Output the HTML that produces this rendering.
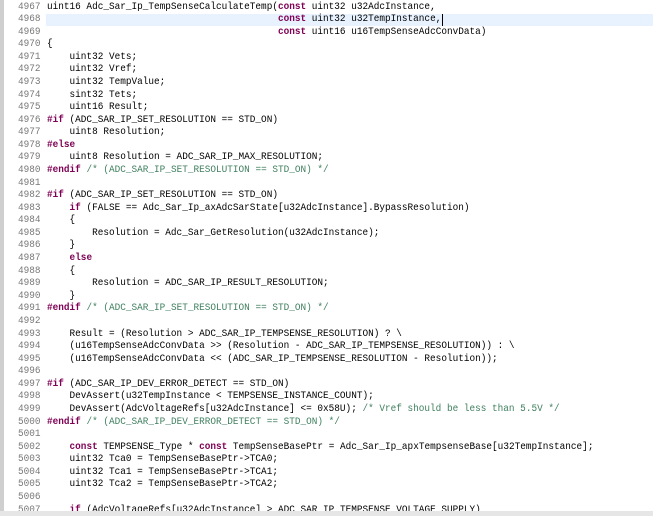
<html><head><style>
body{margin:0;width:653px;height:516px;background:#fff;overflow:hidden;position:relative;font-family:"Liberation Mono",monospace;}
#strip{position:absolute;left:0;top:0;width:4px;height:516px;background:#cfcfcf}
#hl{position:absolute;left:46px;top:13.6px;width:607px;height:12.6px;background:#e8f2fe}
#cur{position:absolute;left:442px;top:14px;width:1px;height:12px;background:#000}
pre{position:absolute;margin:0;top:0.5px;font-family:"Liberation Mono",monospace;font-size:10.5px;line-height:12.58px;letter-spacing:0;transform-origin:0 0;transform:scaleX(0.894)}
#ln{left:18px;color:#787878}
#code{left:47px;color:#000}
b{color:#7f0055}
i{font-style:normal;color:#3f7f5f}
#bot{position:absolute;left:0;top:511px;width:653px;height:5px;background:#e6e6e6}
</style></head><body>
<div id="strip"></div><div id="hl"></div><div id="cur"></div>
<pre id="ln">4967
4968
4969
4970
4971
4972
4973
4974
4975
4976
4977
4978
4979
4980
4981
4982
4983
4984
4985
4986
4987
4988
4989
4990
4991
4992
4993
4994
4995
4996
4997
4998
4999
5000
5001
5002
5003
5004
5005
5006
5007</pre>
<pre id="code">uint16 Adc_Sar_Ip_TempSenseCalculateTemp(<b>const</b> uint32 u32AdcInstance,
                                         <b>const</b> uint32 u32TempInstance,
                                         <b>const</b> uint16 u16TempSenseAdcConvData)
{
    uint32 Vets;
    uint32 Vref;
    uint32 TempValue;
    sint32 Tets;
    uint16 Result;
<b>#if</b> (ADC_SAR_IP_SET_RESOLUTION == STD_ON)
    uint8 Resolution;
<b>#else</b>
    uint8 Resolution = ADC_SAR_IP_MAX_RESOLUTION;
<b>#endif</b> <i>/* (ADC_SAR_IP_SET_RESOLUTION == STD_ON) */</i>

<b>#if</b> (ADC_SAR_IP_SET_RESOLUTION == STD_ON)
    <b>if</b> (FALSE == Adc_Sar_Ip_axAdcSarState[u32AdcInstance].BypassResolution)
    {
        Resolution = Adc_Sar_GetResolution(u32AdcInstance);
    }
    <b>else</b>
    {
        Resolution = ADC_SAR_IP_RESULT_RESOLUTION;
    }
<b>#endif</b> <i>/* (ADC_SAR_IP_SET_RESOLUTION == STD_ON) */</i>

    Result = (Resolution &gt; ADC_SAR_IP_TEMPSENSE_RESOLUTION) ? \
    (u16TempSenseAdcConvData &gt;&gt; (Resolution - ADC_SAR_IP_TEMPSENSE_RESOLUTION)) : \
    (u16TempSenseAdcConvData &lt;&lt; (ADC_SAR_IP_TEMPSENSE_RESOLUTION - Resolution));

<b>#if</b> (ADC_SAR_IP_DEV_ERROR_DETECT == STD_ON)
    DevAssert(u32TempInstance &lt; TEMPSENSE_INSTANCE_COUNT);
    DevAssert(AdcVoltageRefs[u32AdcInstance] &lt;= 0x58U); <i>/* Vref should be less than 5.5V */</i>
<b>#endif</b> <i>/* (ADC_SAR_IP_DEV_ERROR_DETECT == STD_ON) */</i>

    <b>const</b> TEMPSENSE_Type * <b>const</b> TempSenseBasePtr = Adc_Sar_Ip_apxTempsenseBase[u32TempInstance];
    uint32 Tca0 = TempSenseBasePtr-&gt;TCA0;
    uint32 Tca1 = TempSenseBasePtr-&gt;TCA1;
    uint32 Tca2 = TempSenseBasePtr-&gt;TCA2;

    <b>if</b> (AdcVoltageRefs[u32AdcInstance] &gt; ADC_SAR_IP_TEMPSENSE_VOLTAGE_SUPPLY)</pre>
<div id="bot"></div>
</body></html>
